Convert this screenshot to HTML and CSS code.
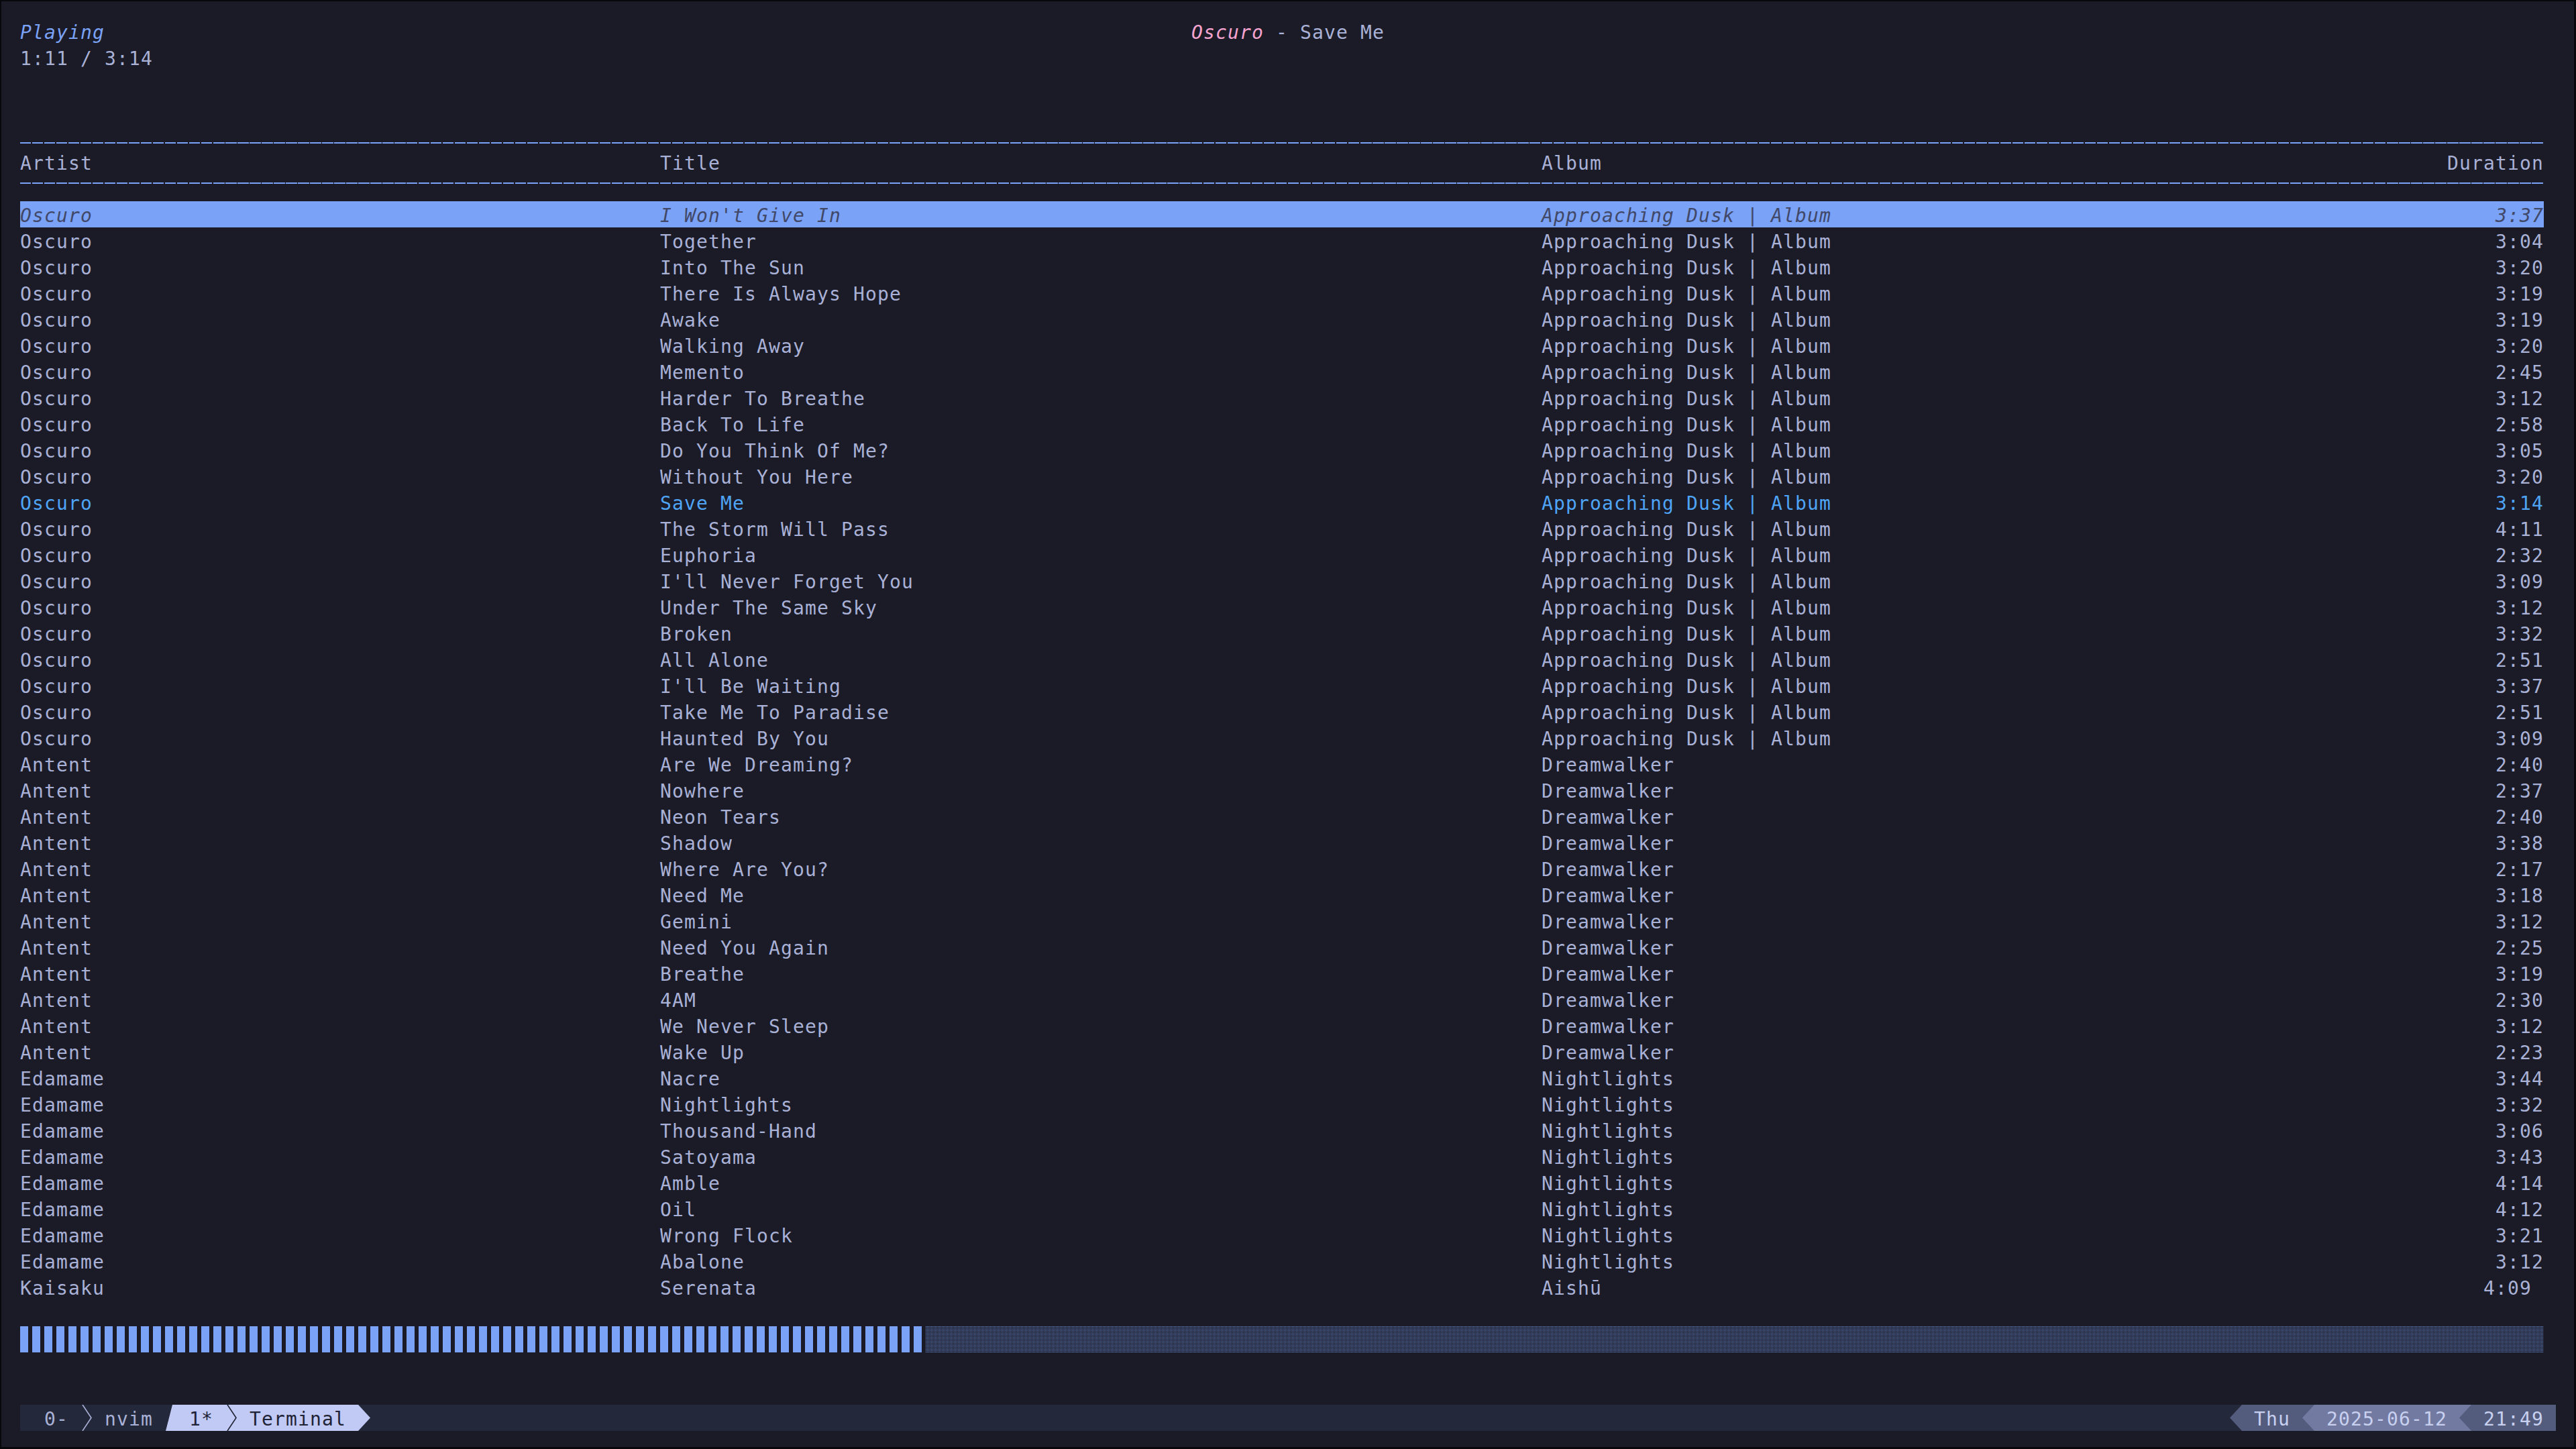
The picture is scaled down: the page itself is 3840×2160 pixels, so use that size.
FILE: index.html
```html
<!DOCTYPE html>
<html lang="en">
<head>
<meta charset="utf-8">
<title>Music Player</title>
<link rel="stylesheet" href="styles.css">
</head>
<body>
<div class="screen">
  <div class="row top">
    <span class="playing">Playing</span>
    <span class="now"><span class="now-artist">Oscuro</span> - Save Me</span>
  </div>
  <div class="row">1:11 / 3:14</div>
  <div class="row"></div>
  <div class="row"></div>
  <div class="row rule rule-a"></div>
  <div class="row track head">
    <span>Artist</span><span>Title</span><span>Album</span><span class="dur">Duration</span>
  </div>
  <div class="row rule rule-b"></div>
  <div class="list">
    <div class="row track selected"><span>Oscuro</span><span>I Won't Give In</span><span>Approaching Dusk | Album</span><span class="dur">3:37</span></div>
    <div class="row track"><span>Oscuro</span><span>Together</span><span>Approaching Dusk | Album</span><span class="dur">3:04</span></div>
    <div class="row track"><span>Oscuro</span><span>Into The Sun</span><span>Approaching Dusk | Album</span><span class="dur">3:20</span></div>
    <div class="row track"><span>Oscuro</span><span>There Is Always Hope</span><span>Approaching Dusk | Album</span><span class="dur">3:19</span></div>
    <div class="row track"><span>Oscuro</span><span>Awake</span><span>Approaching Dusk | Album</span><span class="dur">3:19</span></div>
    <div class="row track"><span>Oscuro</span><span>Walking Away</span><span>Approaching Dusk | Album</span><span class="dur">3:20</span></div>
    <div class="row track"><span>Oscuro</span><span>Memento</span><span>Approaching Dusk | Album</span><span class="dur">2:45</span></div>
    <div class="row track"><span>Oscuro</span><span>Harder To Breathe</span><span>Approaching Dusk | Album</span><span class="dur">3:12</span></div>
    <div class="row track"><span>Oscuro</span><span>Back To Life</span><span>Approaching Dusk | Album</span><span class="dur">2:58</span></div>
    <div class="row track"><span>Oscuro</span><span>Do You Think Of Me?</span><span>Approaching Dusk | Album</span><span class="dur">3:05</span></div>
    <div class="row track"><span>Oscuro</span><span>Without You Here</span><span>Approaching Dusk | Album</span><span class="dur">3:20</span></div>
    <div class="row track current"><span>Oscuro</span><span>Save Me</span><span>Approaching Dusk | Album</span><span class="dur">3:14</span></div>
    <div class="row track"><span>Oscuro</span><span>The Storm Will Pass</span><span>Approaching Dusk | Album</span><span class="dur">4:11</span></div>
    <div class="row track"><span>Oscuro</span><span>Euphoria</span><span>Approaching Dusk | Album</span><span class="dur">2:32</span></div>
    <div class="row track"><span>Oscuro</span><span>I'll Never Forget You</span><span>Approaching Dusk | Album</span><span class="dur">3:09</span></div>
    <div class="row track"><span>Oscuro</span><span>Under The Same Sky</span><span>Approaching Dusk | Album</span><span class="dur">3:12</span></div>
    <div class="row track"><span>Oscuro</span><span>Broken</span><span>Approaching Dusk | Album</span><span class="dur">3:32</span></div>
    <div class="row track"><span>Oscuro</span><span>All Alone</span><span>Approaching Dusk | Album</span><span class="dur">2:51</span></div>
    <div class="row track"><span>Oscuro</span><span>I'll Be Waiting</span><span>Approaching Dusk | Album</span><span class="dur">3:37</span></div>
    <div class="row track"><span>Oscuro</span><span>Take Me To Paradise</span><span>Approaching Dusk | Album</span><span class="dur">2:51</span></div>
    <div class="row track"><span>Oscuro</span><span>Haunted By You</span><span>Approaching Dusk | Album</span><span class="dur">3:09</span></div>
    <div class="row track"><span>Antent</span><span>Are We Dreaming?</span><span>Dreamwalker</span><span class="dur">2:40</span></div>
    <div class="row track"><span>Antent</span><span>Nowhere</span><span>Dreamwalker</span><span class="dur">2:37</span></div>
    <div class="row track"><span>Antent</span><span>Neon Tears</span><span>Dreamwalker</span><span class="dur">2:40</span></div>
    <div class="row track"><span>Antent</span><span>Shadow</span><span>Dreamwalker</span><span class="dur">3:38</span></div>
    <div class="row track"><span>Antent</span><span>Where Are You?</span><span>Dreamwalker</span><span class="dur">2:17</span></div>
    <div class="row track"><span>Antent</span><span>Need Me</span><span>Dreamwalker</span><span class="dur">3:18</span></div>
    <div class="row track"><span>Antent</span><span>Gemini</span><span>Dreamwalker</span><span class="dur">3:12</span></div>
    <div class="row track"><span>Antent</span><span>Need You Again</span><span>Dreamwalker</span><span class="dur">2:25</span></div>
    <div class="row track"><span>Antent</span><span>Breathe</span><span>Dreamwalker</span><span class="dur">3:19</span></div>
    <div class="row track"><span>Antent</span><span>4AM</span><span>Dreamwalker</span><span class="dur">2:30</span></div>
    <div class="row track"><span>Antent</span><span>We Never Sleep</span><span>Dreamwalker</span><span class="dur">3:12</span></div>
    <div class="row track"><span>Antent</span><span>Wake Up</span><span>Dreamwalker</span><span class="dur">2:23</span></div>
    <div class="row track"><span>Edamame</span><span>Nacre</span><span>Nightlights</span><span class="dur">3:44</span></div>
    <div class="row track"><span>Edamame</span><span>Nightlights</span><span>Nightlights</span><span class="dur">3:32</span></div>
    <div class="row track"><span>Edamame</span><span>Thousand-Hand</span><span>Nightlights</span><span class="dur">3:06</span></div>
    <div class="row track"><span>Edamame</span><span>Satoyama</span><span>Nightlights</span><span class="dur">3:43</span></div>
    <div class="row track"><span>Edamame</span><span>Amble</span><span>Nightlights</span><span class="dur">4:14</span></div>
    <div class="row track"><span>Edamame</span><span>Oil</span><span>Nightlights</span><span class="dur">4:12</span></div>
    <div class="row track"><span>Edamame</span><span>Wrong Flock</span><span>Nightlights</span><span class="dur">3:21</span></div>
    <div class="row track"><span>Edamame</span><span>Abalone</span><span>Nightlights</span><span class="dur">3:12</span></div>
    <div class="row track"><span>Kaisaku</span><span>Serenata</span><span>Aishū</span><span class="dur">4:09 </span></div>
  </div>
  <div class="row"></div>
  <div class="row progress">
    <div class="progress-done"></div>
    <div class="progress-rest"></div>
  </div>
  <div class="row"></div>
  <div class="row"></div>
  <div class="status">
    <span class="st-text">  0- </span>
    <svg class="cell" viewBox="0 0 18 39"><polyline points="3,0 16,19.5 3,39" fill="none" stroke="#a9b1d6" stroke-width="1.6"/></svg>
    <span class="st-text"> nvim </span>
    <svg class="cell" viewBox="0 0 18 39"><polygon points="1,39 11,0 18,0 18,39" fill="#c0caf5"/></svg>
    <span class="st-text st-cur"> 1* </span>
    <svg class="cell cur-bg" viewBox="0 0 18 39"><polyline points="3,0 16,19.5 3,39" fill="none" stroke="#1f2335" stroke-width="1.6"/></svg>
    <span class="st-text st-cur"> Terminal </span>
    <svg class="cell" viewBox="0 0 18 39"><polygon points="0,0 18,19.5 0,39" fill="#c0caf5"/></svg>
    <span class="st-fill"></span>
    <svg class="cell" viewBox="0 0 18 39"><polygon points="0,19.5 18,0 18,39" fill="#545c7e"/></svg>
    <span class="st-text seg-a"> Thu </span>
    <svg class="cell seg-a" viewBox="0 0 18 39"><polygon points="0,19.5 18,0 18,39" fill="#737aa2"/></svg>
    <span class="st-text seg-b"> 2025-06-12 </span>
    <svg class="cell seg-b" viewBox="0 0 18 39"><polygon points="0,19.5 18,0 18,39" fill="#545c7e"/></svg>
    <span class="st-text seg-a"> 21:49 </span>
  </div>
</div>
</body>
</html>
```
FILE: styles.css
```css
html, body {
  margin: 0;
  padding: 0;
  background: #08080c;
}

.screen {
  width: 3840px;
  height: 2160px;
  box-sizing: border-box;
  border-style: solid;
  border-color: #08080c;
  border-width: 2px 3px 3px 2px;
  padding: 25px 0 0 28px;
  background: #1a1b26;
  color: #a9b1d6;
  font-family: "DejaVu Sans Mono", "Liberation Mono", monospace;
  font-size: 28px;
  letter-spacing: 1.14px;
  overflow: hidden;
}

.row {
  width: 3762px;
  height: 39px;
  box-sizing: border-box;
  padding-top: 4px;
  line-height: 35px;
  white-space: pre;
}

.top {
  display: grid;
  grid-template-columns: 1746px auto;
}

.playing {
  color: #7aa2f7;
  font-style: italic;
}

.now-artist {
  color: #f5a3cf;
  font-style: italic;
}

.rule {
  padding: 0;
  background-image: repeating-linear-gradient(90deg, #7aa2f7 0 16.5px, transparent 16.5px 18px);
  background-repeat: no-repeat;
  background-size: 100% 2px;
}

.rule-a {
  background-position: 0 29px;
}

.rule-b {
  background-position: 0 11px;
}

.track {
  display: grid;
  grid-template-columns: 954px 1314px 1fr auto;
}

.dur {
  text-align: right;
}

.selected {
  background: #7aa2f7;
  color: #414868;
  font-style: italic;
}

.current {
  color: #4fa4f6;
}

.progress {
  display: flex;
  padding: 0;
}

.progress-done {
  width: 1350px;
  height: 39px;
  background: repeating-linear-gradient(90deg, #7aa2f7 0 12px, transparent 12px 18px);
}

.progress-rest {
  flex: 1;
  height: 39px;
  background-color: #7aa2f7;
  background-image:
    repeating-linear-gradient(90deg, transparent 0 1px, #1a1b26 1px 2px),
    repeating-linear-gradient(180deg, transparent 0 1px, #1a1b26 1px 2px);
}

.status {
  width: 3780px;
  height: 39px;
  display: flex;
  background: #24283b;
  white-space: pre;
}

.cell {
  display: block;
  width: 18px;
  height: 39px;
  flex: none;
}

.st-text {
  display: block;
  height: 39px;
  box-sizing: border-box;
  padding-top: 4px;
  line-height: 35px;
  flex: none;
}

.st-cur,
.cur-bg {
  background: #c0caf5;
  color: #1f2335;
}

.st-fill {
  flex: 1;
}

.seg-a {
  background: #545c7e;
  color: #c8d0f0;
}

.seg-b {
  background: #737aa2;
  color: #c8d0f0;
}
```
